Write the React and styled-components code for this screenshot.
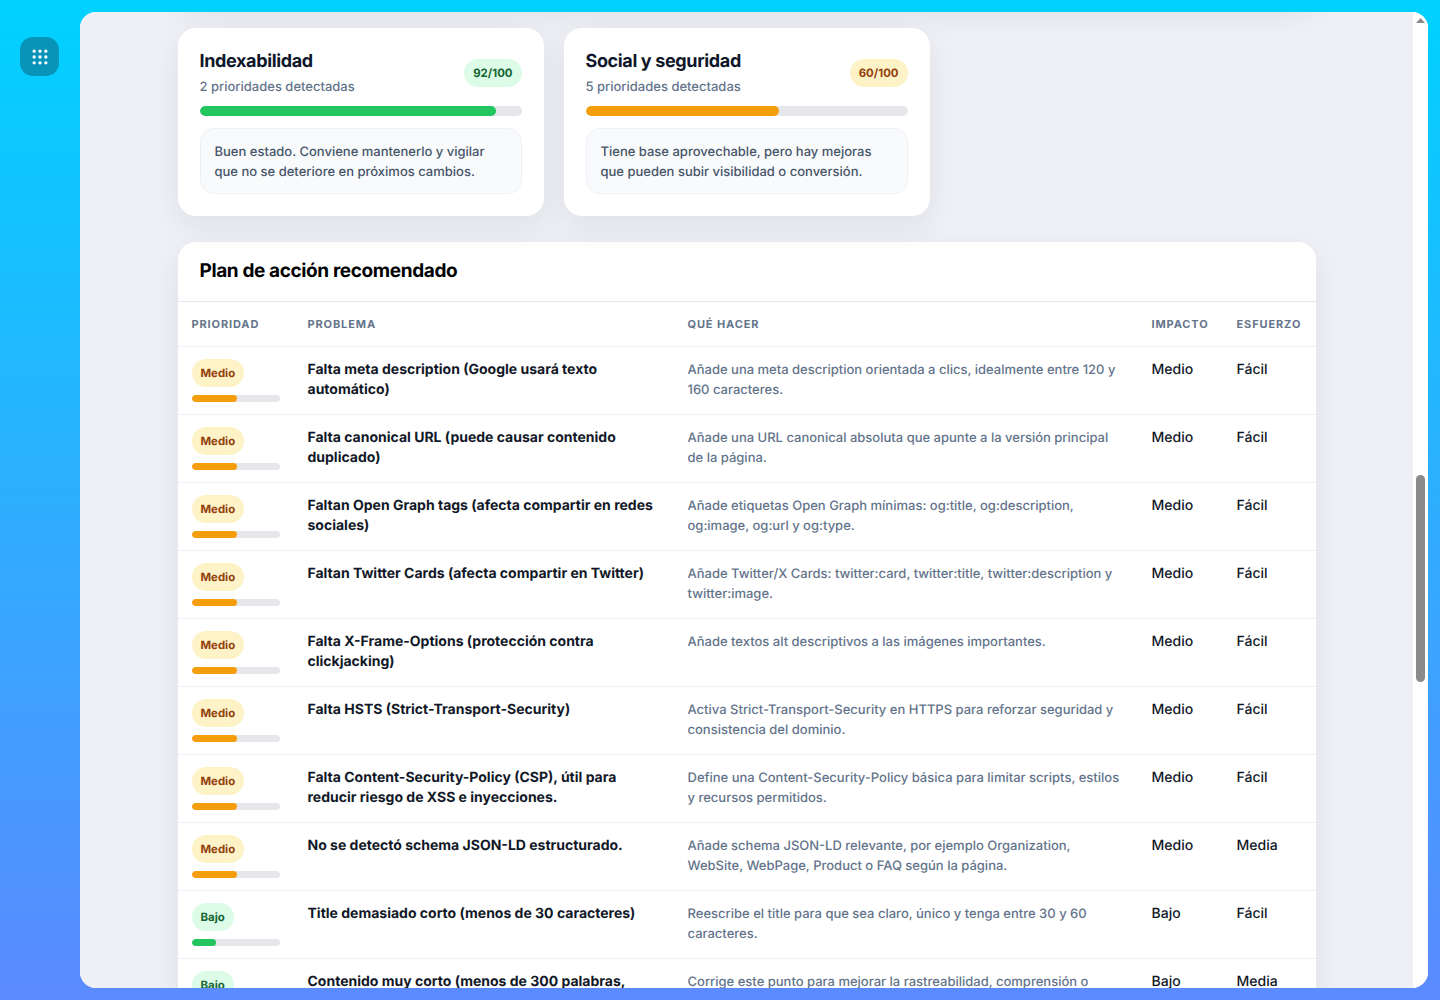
import React from "react";
import styled, { createGlobalStyle } from "styled-components";
import { Grip } from "lucide-react";

const CATEGORIES = [
  {
    title: "Indexabilidad",
    count: "2 prioridades detectadas",
    score: 92,
    tone: "good",
    note: "Buen estado. Conviene mantenerlo y vigilar que no se deteriore en próximos cambios.",
  },
  {
    title: "Social y seguridad",
    count: "5 prioridades detectadas",
    score: 60,
    tone: "warn",
    note: "Tiene base aprovechable, pero hay mejoras que pueden subir visibilidad o conversión.",
  },
];

const ACTIONS = [
  ["Medio", "Falta meta description (Google usará texto automático)", "Añade una meta description orientada a clics, idealmente entre 120 y 160 caracteres.", "Fácil"],
  ["Medio", "Falta canonical URL (puede causar contenido duplicado)", "Añade una URL canonical absoluta que apunte a la versión principal de la página.", "Fácil"],
  ["Medio", "Faltan Open Graph tags (afecta compartir en redes sociales)", "Añade etiquetas Open Graph mínimas: og:title, og:description, og:image, og:url y og:type.", "Fácil"],
  ["Medio", "Faltan Twitter Cards (afecta compartir en Twitter)", "Añade Twitter/X Cards: twitter:card, twitter:title, twitter:description y twitter:image.", "Fácil"],
  ["Medio", "Falta X-Frame-Options (protección contra clickjacking)", "Añade textos alt descriptivos a las imágenes importantes.", "Fácil"],
  ["Medio", "Falta HSTS (Strict-Transport-Security)", "Activa Strict-Transport-Security en HTTPS para reforzar seguridad y consistencia del dominio.", "Fácil"],
  ["Medio", "Falta Content-Security-Policy (CSP), útil para reducir riesgo de XSS e inyecciones.", "Define una Content-Security-Policy básica para limitar scripts, estilos y recursos permitidos.", "Fácil"],
  ["Medio", "No se detectó schema JSON-LD estructurado.", "Añade schema JSON-LD relevante, por ejemplo Organization, WebSite, WebPage, Product o FAQ según la página.", "Media"],
  ["Bajo", "Title demasiado corto (menos de 30 caracteres)", "Reescribe el title para que sea claro, único y tenga entre 30 y 60 caracteres.", "Fácil"],
  ["Bajo", "Contenido muy corto (menos de 300 palabras, puede ser thin content)", "Corrige este punto para mejorar la rastreabilidad, comprensión o relevancia de la página.", "Media"],
];

export default function App() {
  return (
    <>
      <GlobalStyle />
      <Shell>
        <Sidebar>
          <MenuButton>
            <Grip size={20} strokeWidth={2} />
          </MenuButton>
        </Sidebar>
        <Panel>
          <Scroller>
            <Content>
              <ScrolledCard />
              <CardGrid>
                {CATEGORIES.map((cat) => (
                  <Card key={cat.title}>
                    <CardHead>
                      <div>
                        <CardTitle>{cat.title}</CardTitle>
                        <CardCount>{cat.count}</CardCount>
                      </div>
                      <ScorePill $tone={cat.tone}>{cat.score}/100</ScorePill>
                    </CardHead>
                    <ScoreTrack>
                      <ScoreFill $tone={cat.tone} style={{ width: `${cat.score}%` }} />
                    </ScoreTrack>
                    <Note>{cat.note}</Note>
                  </Card>
                ))}
              </CardGrid>
              <PlanCard>
                <PlanHead>
                  <PlanTitle>Plan de acción recomendado</PlanTitle>
                </PlanHead>
                <Table>
                  <colgroup>
                    <col style={{ width: 116 }} />
                    <col style={{ width: 380 }} />
                    <col style={{ width: 464 }} />
                    <col style={{ width: 85 }} />
                    <col style={{ width: 93 }} />
                  </colgroup>
                  <thead>
                    <tr>
                      <Th>Prioridad</Th>
                      <Th>Problema</Th>
                      <Th>Qué hacer</Th>
                      <Th>Impacto</Th>
                      <Th>Esfuerzo</Th>
                    </tr>
                  </thead>
                  <tbody>
                    {ACTIONS.map(([impact, problem, fix, effort], index) => (
                      <tr key={index}>
                        <Td>
                          <PriorityPill $low={impact === "Bajo"}>{impact}</PriorityPill>
                          <PriorityTrack>
                            <PriorityFill $low={impact === "Bajo"} />
                          </PriorityTrack>
                        </Td>
                        <Problem>{problem}</Problem>
                        <Fix>{fix}</Fix>
                        <Plain>{impact}</Plain>
                        <Plain>{effort}</Plain>
                      </tr>
                    ))}
                  </tbody>
                </Table>
              </PlanCard>
            </Content>
          </Scroller>
          <Scrollbar>
            <ArrowUp />
            <Thumb />
          </Scrollbar>
        </Panel>
      </Shell>
    </>
  );
}

const GlobalStyle = createGlobalStyle`
  * {
    box-sizing: border-box;
  }
  html, body {
    margin: 0;
    height: 100%;
    overflow: hidden;
  }
  body {
    font-family: Inter, "Liberation Sans", sans-serif;
    color: #111827;
    text-rendering: geometricPrecision;
  }
`;

const Shell = styled.div`
  display: flex;
  height: 100vh;
  background: linear-gradient(180deg, #00d2ff 0%, #5b8aff 100%);
`;

const Sidebar = styled.aside`
  flex: 0 0 80px;
  padding: 37px 21px 0 20px;
`;

const MenuButton = styled.div`
  width: 39px;
  height: 39px;
  border-radius: 13px;
  background: #0894b9;
  color: #fff;
  display: flex;
  align-items: center;
  justify-content: center;
`;

const Panel = styled.main`
  flex: 1;
  display: flex;
  margin: 12px 12px 12px 0;
  border-radius: 16px;
  overflow: hidden;
  background: #fff;
`;

const Scroller = styled.div`
  flex: 1;
  overflow: hidden;
  background: #eef0f5;
`;

const Content = styled.div`
  width: 1138px;
  margin: 0 auto;
  padding-top: 16px;
`;

const ScrolledCard = styled.div`
  height: 60px;
  margin: -84px 0 24px;
  border-radius: 20px;
  background: #fff;
  box-shadow: 0 10px 30px rgba(15, 23, 42, 0.07);
`;

const CardGrid = styled.div`
  display: grid;
  grid-template-columns: repeat(3, 1fr);
  gap: 20px;
  margin-bottom: 26px;
`;

const Card = styled.section`
  background: #fff;
  border-radius: 18px;
  padding: 22px;
  box-shadow: 0 10px 30px rgba(15, 23, 42, 0.07);
`;

const CardHead = styled.div`
  display: flex;
  align-items: center;
  justify-content: space-between;
  margin-bottom: 9px;
`;

const CardTitle = styled.h3`
  margin: 0 0 4px;
  font-size: 18px;
  line-height: 24px;
  font-weight: 700;
  letter-spacing: -0.02em;
  color: #0f172a;
`;

const CardCount = styled.div`
  font-size: 13px;
  line-height: 19px;
  font-weight: 500;
  color: #64748b;
`;

const ScorePill = styled.span`
  height: 28px;
  margin-bottom: 1px;
  padding: 0 9px;
  border-radius: 14px;
  display: inline-flex;
  align-items: center;
  font-size: 11.4px;
  font-weight: 700;
  background: ${(p) => (p.$tone === "good" ? "#dcfce7" : "#fef3c7")};
  color: ${(p) => (p.$tone === "good" ? "#166534" : "#92400e")};
`;

const ScoreTrack = styled.div`
  height: 10px;
  border-radius: 5px;
  background: #e5e7eb;
  overflow: hidden;
  margin-bottom: 12px;
`;

const ScoreFill = styled.div`
  height: 100%;
  border-radius: 5px;
  background: ${(p) => (p.$tone === "good" ? "#22c55e" : "#f59e0b")};
`;

const Note = styled.p`
  margin: 0;
  padding: 13px 14px 11px;
  border: 1px solid #eef0f5;
  border-radius: 14px;
  background: #f8fafc;
  font-size: 13px;
  line-height: 20px;
  font-weight: 500;
  color: #475569;
`;

const PlanCard = styled.section`
  background: #fff;
  border-radius: 18px;
  box-shadow: 0 10px 30px rgba(15, 23, 42, 0.07);
`;

const PlanHead = styled.header`
  height: 60px;
  padding: 0 22px 3px;
  display: flex;
  align-items: center;
  border-bottom: 1px solid #e5e7eb;
`;

const PlanTitle = styled.h2`
  margin: 0;
  font-size: 19px;
  font-weight: 700;
  letter-spacing: -0.02em;
  color: #000;
`;

const Table = styled.table`
  width: 100%;
  border-collapse: collapse;
  table-layout: fixed;
`;

const Th = styled.th`
  height: 44px;
  padding: 0 14px;
  text-align: left;
  font-size: 11px;
  font-weight: 700;
  letter-spacing: 0.08em;
  text-transform: uppercase;
  color: #64748b;
  border-bottom: 1px solid #eef0f5;
`;

const Td = styled.td`
  padding: 12px 14px;
  vertical-align: top;
  border-bottom: 1px solid #eef0f5;
`;

const TextCell = styled(Td)`
  padding-top: 13px;
  padding-bottom: 11px;
  line-height: 20px;
`;

const Problem = styled(TextCell)`
  font-size: 14px;
  font-weight: 700;
  color: #111827;
`;

const Fix = styled(TextCell)`
  font-size: 13px;
  font-weight: 500;
  color: #64748b;
`;

const Plain = styled(TextCell)`
  font-size: 14px;
  font-weight: 500;
  color: #111827;
`;

const PriorityPill = styled.span`
  display: inline-flex;
  align-items: center;
  height: 28px;
  padding: 0 9px;
  border-radius: 14px;
  font-size: 11.4px;
  font-weight: 700;
  background: ${(p) => (p.$low ? "#dcfce7" : "#fef3c7")};
  color: ${(p) => (p.$low ? "#166534" : "#92400e")};
`;

const PriorityTrack = styled.div`
  width: 88px;
  height: 7px;
  margin-top: 8px;
  border-radius: 4px;
  background: #e5e7eb;
  overflow: hidden;
`;

const PriorityFill = styled.div`
  width: ${(p) => (p.$low ? "27.5%" : "51.5%")};
  height: 100%;
  border-radius: 4px;
  background: ${(p) => (p.$low ? "#22c55e" : "#f59e0b")};
`;

const Scrollbar = styled.div`
  flex: 0 0 15px;
  background: #fff;
  padding: 6px 3px 0;
`;

const ArrowUp = styled.div`
  width: 9px;
  height: 5px;
  background: #8a8a8a;
  clip-path: polygon(50% 0, 100% 100%, 0 100%);
`;

const Thumb = styled.div`
  width: 9px;
  height: 207px;
  margin-top: 452px;
  border-radius: 5px;
  background: #8a8a8a;
`;
